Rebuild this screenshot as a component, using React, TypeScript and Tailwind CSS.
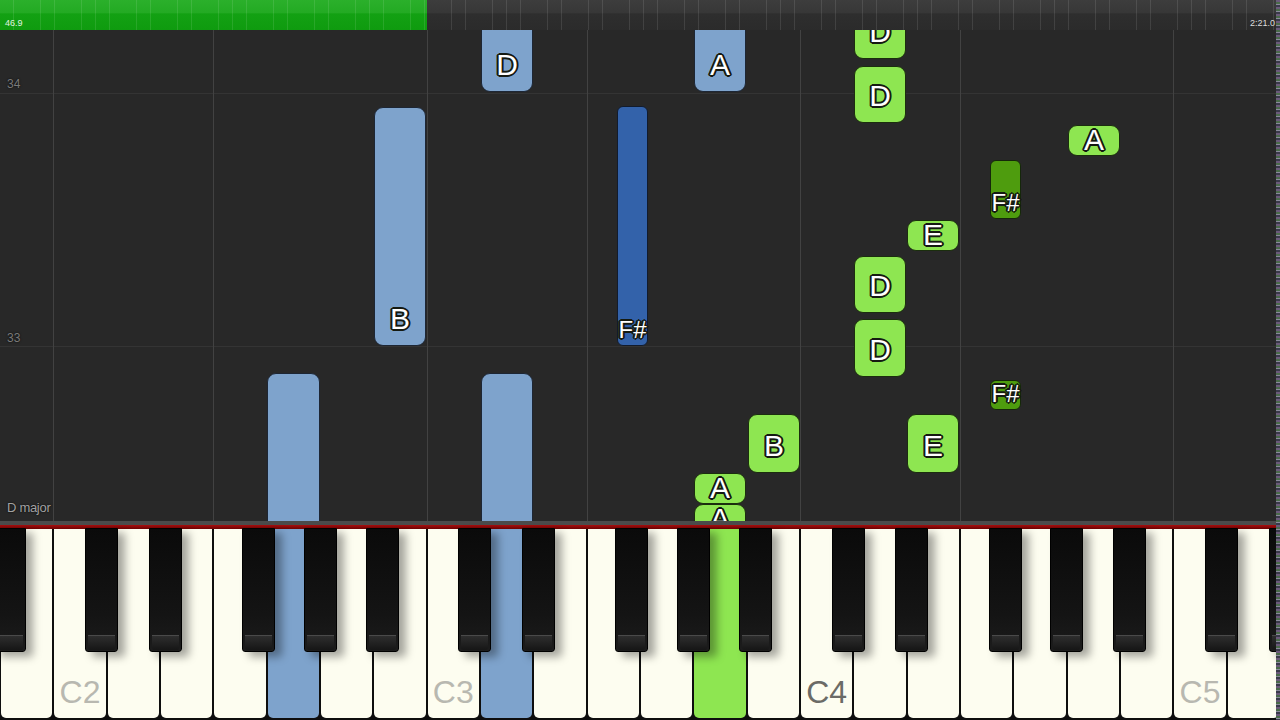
import React from "react";

type Kind = "lb" | "db" | "lg" | "dg";
type Note = { x: number; w: number; top: number; h: number; label?: string; kind: Kind };

const notes: Note[] = [
  { x: 481, w: 52, top: -20, h: 82, label: "D", kind: "lb" },
  { x: 694, w: 52, top: -20, h: 82, label: "A", kind: "lb" },
  { x: 374, w: 52, top: 77, h: 239, label: "B", kind: "lb" },
  { x: 617, w: 31, top: 76, h: 240, label: "F#", kind: "db" },
  { x: 267, w: 53, top: 343, h: 200, kind: "lb" },
  { x: 481, w: 52, top: 343, h: 200, kind: "lb" },
  { x: 854, w: 52, top: -25, h: 54, label: "D", kind: "lg" },
  { x: 854, w: 52, top: 36, h: 57, label: "D", kind: "lg" },
  { x: 1068, w: 52, top: 95, h: 31, label: "A", kind: "lg" },
  { x: 990, w: 31, top: 130, h: 59, label: "F#", kind: "dg" },
  { x: 907, w: 52, top: 190, h: 31, label: "E", kind: "lg" },
  { x: 854, w: 52, top: 226, h: 57, label: "D", kind: "lg" },
  { x: 854, w: 52, top: 289, h: 58, label: "D", kind: "lg" },
  { x: 990, w: 31, top: 350, h: 30, label: "F#", kind: "dg" },
  { x: 748, w: 52, top: 384, h: 59, label: "B", kind: "lg" },
  { x: 907, w: 52, top: 384, h: 59, label: "E", kind: "lg" },
  { x: 694, w: 52, top: 443, h: 31, label: "A", kind: "lg" },
  { x: 694, w: 52, top: 474, h: 31, label: "A", kind: "lg" },
];

const kindCls: Record<Kind, string> = {
  lb: "bg-[#7ea3cc] border-[#1d2634] rounded-[9px]",
  db: "bg-[#3362aa] border-[#121b2c] rounded-[6px]",
  lg: "bg-[#8ee651] border-[#1b2e0e] rounded-[9px]",
  dg: "bg-[#4e9c0e] border-[#15270a] rounded-[6px]",
};

const outline =
  "[text-shadow:-2px_0_0_#151a12,2px_0_0_#151a12,0_-2px_0_#151a12,0_2px_0_#151a12,-1.4px_-1.4px_0_#151a12,1.4px_-1.4px_0_#151a12,-1.4px_1.4px_0_#151a12,1.4px_1.4px_0_#151a12]";

const vLines = [53, 213, 427, 587, 800, 960, 1173];
const hLines = [63, 316];

const whiteLabels: Record<number, string> = { 1: "C2", 8: "C3", 15: "C4", 22: "C5" };
const pressed: Record<number, string> = { 5: "bg-[#7ea3cc]", 9: "bg-[#7ea3cc]", 13: "bg-[#8ee651]" };

const blackOffsets = [31.8, 95.2, 188.8, 250.2, 312.5];
const blackKeys: number[] = [];
blackKeys.push(-320 + blackOffsets[4]);
[53.333, 426.667, 800].forEach((cx) => blackOffsets.forEach((o) => blackKeys.push(cx + o)));
blackKeys.push(1173.333 + blackOffsets[0], 1173.333 + blackOffsets[1]);

function NoteBlock({ n }: { n: Note }) {
  const labelH = Math.min(n.w, n.h);
  const isBlack = n.kind === "db" || n.kind === "dg";
  return (
    <div
      className={`absolute border-[1.5px] ${kindCls[n.kind]}`}
      style={{ left: n.x, top: n.top, width: n.w, height: n.h }}
    >
      {n.label && (
        <div
          className="absolute bottom-0 left-0 right-0 flex items-center justify-center"
          style={{ height: labelH }}
        >
          <span
            className={`leading-none text-white ${outline} ${isBlack ? "text-[24px]" : "text-[30px]"}`}
          >
            {n.label}
          </span>
        </div>
      )}
    </div>
  );
}

export default function App() {
  return (
    <div className="relative w-[1280px] h-[720px] overflow-hidden flex flex-col bg-[#282828] font-['Liberation_Sans',Arial,sans-serif]">
      {/* top progress bar */}
      <div className="relative h-[30px] flex shrink-0">
        <div className="w-[427px] h-full bg-[linear-gradient(180deg,#2bb02b_0%,#23aa23_43%,#13a113_46%,#0f9b0f_100%)]" />
        <div className="flex-1 h-full bg-[linear-gradient(180deg,#3d3d3d_0%,#373737_43%,#2e2e2e_46%,#2b2b2b_100%)]" />
        <div className="absolute inset-0 bg-[repeating-linear-gradient(90deg,transparent_0px,transparent_13px,rgba(255,255,255,0.1)_13px,rgba(255,255,255,0.1)_13.7px)]" />
        <span className="absolute left-[5px] top-[19px] text-[9px] leading-none text-[#e0f4e0]">46.9</span>
        <span className="absolute left-[1250px] top-[19px] text-[9px] leading-none text-[#dddddd]">2:21.0</span>
      </div>

      {/* note canvas */}
      <div className="relative h-[491px] shrink-0 overflow-hidden bg-[#282828]">
        {hLines.map((y) => (
          <div key={y} className="absolute left-0 right-0 h-px bg-[#343434]" style={{ top: y }} />
        ))}
        {vLines.map((x) => (
          <div key={x} className="absolute top-0 bottom-0 w-px bg-[#424242]" style={{ left: x }} />
        ))}
        <span className="absolute left-[7px] top-[48px] text-[12px] leading-none text-[#7a7a7a] [text-shadow:0_0_2px_#000]">34</span>
        <span className="absolute left-[7px] top-[302px] text-[12px] leading-none text-[#7a7a7a] [text-shadow:0_0_2px_#000]">33</span>
        <span className="absolute left-[7px] top-[471px] text-[13px] leading-none tracking-[-0.3px] text-[#a2a2a2] [text-shadow:0_0_2px_#000]">D major</span>
        {notes.map((n, i) => (
          <NoteBlock key={i} n={n} />
        ))}
      </div>

      <div className="h-[4px] shrink-0 bg-[#4b4b4b]" />
      <div className="h-[4px] shrink-0 bg-[linear-gradient(180deg,#a80e0e,#6a0303)]" />

      {/* keyboard */}
      <div className="relative h-[191px] shrink-0 bg-[#0e0e0e]">
        <div className="grid grid-cols-24 h-full">
          {Array.from({ length: 24 }).map((_, i) => (
            <div key={i} className="relative h-full px-[1px]">
              <div
                className={`relative h-[189px] rounded-b-[5px] flex flex-col justify-end items-center pb-[10px] ${pressed[i] ?? "bg-[#fdfdf0]"}`}
              >
                {whiteLabels[i] && (
                  <span
                    className={`text-[32px] leading-none ${i === 15 ? "text-[#6b6b66]" : "text-[#b8b8b0]"}`}
                  >
                    {whiteLabels[i]}
                  </span>
                )}
              </div>
            </div>
          ))}
        </div>
        {blackKeys.map((x, i) => (
          <div
            key={i}
            className="absolute top-[-1px] h-[124px] w-[33px] rounded-b-[3px] border border-black bg-[linear-gradient(180deg,#0a0a0a_0%,#141414_70%,#1c1c1c_100%)] shadow-[7px_5px_8px_rgba(0,0,0,0.35)]"
            style={{ left: x }}
          >
            <div className="absolute bottom-[1px] left-[2px] right-[2px] h-[15px] border-t border-[#4a4a4a] rounded-b-[2px] bg-[linear-gradient(180deg,#2e2e2e,#161616)]" />
          </div>
        ))}
      </div>

      {/* right edge noise stripe */}
      <div className="absolute right-0 top-0 w-[4px] h-full bg-[repeating-linear-gradient(180deg,#6b5a7a_0px,#6b5a7a_2px,#4a6a4a_2px,#4a6a4a_4px,#8a8a9a_4px,#8a8a9a_5px,#3a3a4a_5px,#3a3a4a_7px)]" />
    </div>
  );
}
